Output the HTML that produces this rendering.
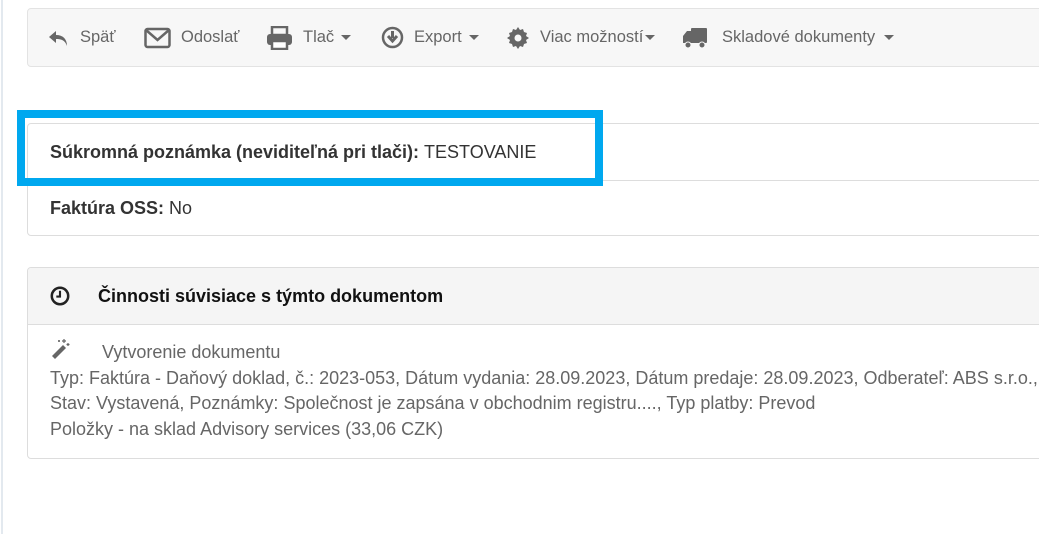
<!DOCTYPE html>
<html><head><meta charset="utf-8"><style>
*{box-sizing:border-box;margin:0;padding:0}
body{width:1039px;height:534px;background:#fff;font-family:"Liberation Sans",Arial,sans-serif;font-size:18px;color:#333;position:relative;overflow:hidden}
.lline{position:absolute;left:1px;top:0;width:2px;height:534px;background:#e3e9ef}
.tb{position:absolute;left:27px;top:8px;width:1030px;height:59px;background:#f7f7f7;border:1px solid #e3e3e3;border-radius:4px}
.it{position:absolute;top:0;height:57px;display:flex;align-items:center;color:#666;font-size:16.5px}
.it svg{margin-right:10px}
.car{display:inline-block;width:0;height:0;border-left:5px solid transparent;border-right:5px solid transparent;border-top:5px solid #666;margin-left:7px;vertical-align:middle}
.p1{position:absolute;left:27px;top:123px;width:1030px;height:113px;border:1px solid #ddd;border-radius:4px}
.row{height:56px;padding-left:22px;display:flex;align-items:center;color:#333}
.row+.row{border-top:1px solid #ddd}
.hl{position:absolute;left:17px;top:110px;width:586px;height:76px;border:8px solid #00a8ef}
.p2{position:absolute;left:27px;top:267px;width:1030px;height:192px;border:1px solid #ddd;border-radius:4px;overflow:hidden}
.ph{height:57px;background:#f5f5f5;border-bottom:1px solid #ddd;display:flex;align-items:center;padding-left:22px;color:#111;font-weight:bold}
.pb{padding:14px 0 0 22px;color:#666;line-height:25.5px;white-space:nowrap}
</style></head><body>
<div class="lline"></div>
<div class="tb">
 <div class="it" style="left:20px"><svg width="22" height="20" viewBox="0 0 22 20"><path d="M8 3 L1 9 L8 15 V11 C13 11 17 12 19 18 C19 11 15 7 8 7Z" fill="#666"/></svg>Späť</div>
 <div class="it" style="left:116px"><svg width="27" height="22" viewBox="0 0 27 22"><rect x="1.5" y="2" width="24" height="18" rx="2" fill="none" stroke="#666" stroke-width="2.5"/><path d="M2 3 L13.5 13 L25 3" fill="none" stroke="#666" stroke-width="2.5"/></svg>Odoslať</div>
 <div class="it" style="left:238px"><svg width="27" height="24" viewBox="0 0 27 24"><rect x="6" y="1" width="15" height="8" fill="none" stroke="#666" stroke-width="2.5"/><rect x="1" y="8" width="25" height="11" rx="3" fill="#666"/><rect x="6" y="15" width="15" height="8" fill="#fff" stroke="#666" stroke-width="2.5"/></svg>Tlač<span class="car"></span></div>
 <div class="it" style="left:353px"><svg width="23" height="23" viewBox="0 0 23 23"><circle cx="11.5" cy="11.5" r="9.5" fill="none" stroke="#666" stroke-width="2.5"/><path d="M11.5 5 V12 M7 10 L11.5 15 L16 10" fill="none" stroke="#666" stroke-width="3"/></svg>Export<span class="car"></span></div>
 <div class="it" style="left:478px"><svg width="24" height="24" viewBox="0 0 24 24"><path d="M12 1l2 3 3-1 1 3 3 1-1 3 3 2-3 2 1 3-3 1-1 3-3-1-2 3-2-3-3 1-1-3-3-1 1-3-3-2 3-2-1-3 3-1 1-3 3 1z" fill="#666"/><circle cx="12" cy="12" r="3.5" fill="#f7f7f7"/></svg>Viac možností<span class="car" style="margin-left:2px"></span></div>
 <div class="it" style="left:654px"><svg width="26" height="22" viewBox="0 0 26 22"><path d="M1 9 L5 4 H10 V16 H1Z" fill="#666"/><rect x="9" y="1" width="16" height="15" rx="1" fill="#666"/><circle cx="6" cy="18" r="3" fill="#666" stroke="#f7f7f7" stroke-width="1"/><circle cx="20" cy="18" r="3" fill="#666" stroke="#f7f7f7" stroke-width="1"/></svg><span style="margin-left:4px">Skladové dokumenty</span><span class="car" style="margin-left:9px"></span></div>
</div>
<div class="p1">
 <div class="row"><b>Súkromná poznámka (neviditeľná pri tlači):</b>&nbsp;TESTOVANIE</div>
 <div class="row"><b>Faktúra OSS:</b>&nbsp;No</div>
</div>
<div class="hl"></div>
<div class="p2">
 <div class="ph"><svg width="20" height="20" viewBox="0 0 19 19" style="margin-right:28px"><circle cx="9.5" cy="9.5" r="7.8" fill="none" stroke="#222" stroke-width="2.4"/><path d="M9.5 4.5 V10 H6" fill="none" stroke="#222" stroke-width="2"/></svg>Činnosti súvisiace s týmto dokumentom</div>
 <div class="pb">
  <div><svg width="20" height="20" viewBox="0 0 20 20" style="vertical-align:-1px;margin-right:32px"><path d="M2 17 L13 6 L16 9 L5 20Z" fill="#666"/><path d="M14 0v4M12 2h4M18 4v3M16.5 5.5h3M9 1v2M8 2h2" stroke="#666" stroke-width="1.2"/></svg>Vytvorenie dokumentu</div>
  <div>Typ: Faktúra - Daňový doklad, č.: 2023-053, Dátum vydania: 28.09.2023, Dátum predaje: 28.09.2023, Odberateľ: ABS s.r.o.,</div>
  <div>Stav: Vystavená, Poznámky: Společnost je zapsána v obchodnim registru...., Typ platby: Prevod</div>
  <div>Položky - na sklad Advisory services (33,06 CZK)</div>
 </div>
</div>
</body></html>
